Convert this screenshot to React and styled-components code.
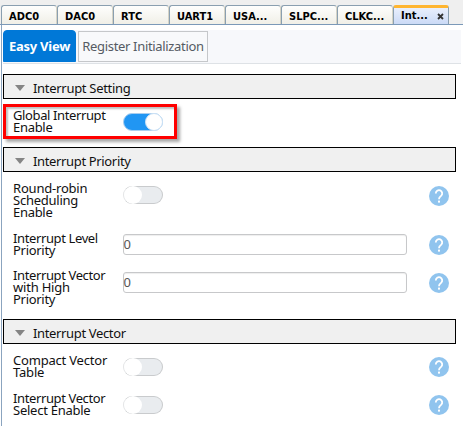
import React from "react";
import styled, { createGlobalStyle } from "styled-components";

const GlobalStyle = createGlobalStyle`
  * { box-sizing: border-box; }
  body { margin: 0; background: #fff; overflow: hidden; }
`;

const Page = styled.main`
  width: 463px;
  height: 426px;
  overflow: hidden;
  display: flex;
  flex-direction: column;
  background: #fff;
  color: #111;
  font: 13px/12px "Noto Sans", sans-serif;
`;

const FileTabs = styled.nav`
  flex: none;
  display: flex;
  height: 25px;
  padding: 5px 0 0 1px;
  background: #efefef;
  border-bottom: 1px solid #7b99b8;
`;

const FileTab = styled.div`
  width: 56px;
  height: 19px;
  display: flex;
  align-items: center;
  justify-content: space-between;
  padding: ${(p) => (p.$active ? "0 4px 0 7px" : "3px 0 0 7px")};
  border: 1px solid #8a9fb0;
  border-right-color: ${(p) => (p.$active ? "#8a9fb0" : "#d5d3c6")};
  border-bottom: 0;
  border-top: ${(p) => (p.$active ? "3px solid #ffb52f" : "1px solid #8a9fb0")};
  border-radius: 3px 3px 0 0;
  background: ${(p) =>
    p.$active
      ? "linear-gradient(#e9effc, #cbdaf6)"
      : "linear-gradient(#fefefd, #f0efe7)"};
  color: #000;
  font: bold 11px/14px "DejaVu Sans Condensed", "DejaVu Sans", sans-serif;
  white-space: nowrap;
`;

const Panel = styled.div`
  flex: 1;
  padding-top: 5px;
  margin-left: 1px;
  padding-left: 1px;
  border-left: 1px solid #8ba4bf;
`;

const ViewTabs = styled.div`
  display: flex;
  align-items: flex-end;
  gap: 2px;
  width: 458px;
  height: 34px;
  padding-bottom: 1px;
  background: #f7f8fb;
  border-bottom: 1px solid #dee2e6;
`;

const ViewTab = styled.div`
  width: ${(p) => (p.$active ? 73 : 130)}px;
  height: ${(p) => (p.$active ? 32 : 31)}px;
  line-height: ${(p) => (p.$active ? 31 : 29)}px;
  text-align: center;
  white-space: nowrap;
  border: 1px solid ${(p) => (p.$active ? "#0078d7" : "#c5c7ca")};
  border-radius: ${(p) => (p.$active ? "4px 4px 0 0" : "0")};
  background: ${(p) => (p.$active ? "#0078d7" : "#f8f9fb")};
  color: ${(p) => (p.$active ? "#fff" : "#555b63")};
  font-weight: ${(p) => (p.$active ? 700 : 400)};
  letter-spacing: ${(p) => p.$spacing}px;
`;

const Sections = styled.div`
  padding-top: 10px;
  width: 453px;
`;

const SectionHeader = styled.header`
  display: flex;
  align-items: center;
  gap: 8px;
  height: 25px;
  padding-left: 11px;
  border: 1px solid #000;
  background: #f0f0f0;
`;

const Arrow = styled.span`
  margin-top: 3px;
  border: 5px solid transparent;
  border-top: 6px solid #858585;
  border-bottom: 0;
`;

const HeaderText = styled.span`
  padding-top: 3px;
  letter-spacing: ${(p) => p.$spacing}px;
  white-space: nowrap;
`;

const Row = styled.div`
  position: relative;
  display: grid;
  grid-template-columns: 110px 284px 1fr;
  height: ${(p) => p.$height}px;
  padding-left: 10px;
`;

const Label = styled.div`
  display: flex;
  flex-direction: column;
  padding-top: ${(p) => p.$top}px;
`;

const LabelLine = styled.span`
  white-space: nowrap;
  letter-spacing: ${(p) => p.$spacing}px;
`;

const Switch = styled.div`
  width: 40px;
  height: 18px;
  display: flex;
  align-items: center;
  justify-content: ${(p) => (p.$on ? "flex-end" : "flex-start")};
  margin-top: ${(p) => p.$top}px;
  border: 1px solid ${(p) => (p.$on ? "#a9cdee" : "#c9cbcd")};
  border-left-color: ${(p) => (p.$on ? "#a9cdee" : "#e4e5e6")};
  border-radius: 9px;
  background: ${(p) => (p.$on ? "#2196f3" : "#e9ecef")};
`;

const Knob = styled.span`
  width: 18px;
  height: 18px;
  flex: none;
  margin-right: -1px;
  border-radius: 50%;
  border: ${(p) => (p.$on ? "1px solid #cbe1f5" : "0")};
  background: #fff;
`;

const Field = styled.div`
  width: 284px;
  height: 21px;
  margin-top: ${(p) => p.$top}px;
  border: 1px solid #c7c8ca;
  border-radius: 3px;
  box-shadow: inset 0 1px 1px #eeeeee;
  line-height: 19px;
  text-indent: -0.5px;
  color: #555;
`;

const Help = styled.svg`
  width: 20px;
  height: 20px;
  margin: ${(p) => p.$top}px 0 0 22px;
`;

const Highlight = styled.div`
  position: absolute;
  left: 0;
  top: 5px;
  width: 174px;
  height: 35px;
  border: 3px solid #f00;
  box-shadow: 3px 3px 3px rgba(0, 0, 0, 0.35), inset 2px 2px 2px rgba(0, 0, 0, 0.25);
`;

const tabs = ["ADC0", "DAC0", "RTC", "UART1", "USA...", "SLPC...", "CLKC..."];

function Section({ title, spacing, children }) {
  return (
    <section>
      <SectionHeader>
        <Arrow />
        <HeaderText $spacing={spacing}>{title}</HeaderText>
      </SectionHeader>
      {children}
    </section>
  );
}

function Setting({ height, lines, labelTop, controlTop, helpTop, field, on, highlighted }) {
  return (
    <Row $height={height}>
      <Label $top={labelTop}>
        {lines.map(([text, spacing]) => (
          <LabelLine key={text} $spacing={spacing}>{text}</LabelLine>
        ))}
      </Label>
      {field !== undefined ? (
        <Field $top={controlTop}>{field}</Field>
      ) : (
        <Switch $top={controlTop} $on={on}><Knob $on={on} /></Switch>
      )}
      {helpTop !== undefined && (
        <Help $top={helpTop} viewBox="0 0 20 20">
          <circle cx="10" cy="10" r="10" fill="#90c4ee" />
          <path d="M6.8 7.4a3.2 3.2 0 1 1 5.5 2.2c-1.3 1.2-2.3 1.7-2.3 3.6" fill="none" stroke="#fff" strokeWidth="1.8" />
          <rect x="9" y="14.6" width="2" height="2" fill="#fff" />
        </Help>
      )}
      {highlighted && <Highlight />}
    </Row>
  );
}

export default function App() {
  return (
    <Page>
      <GlobalStyle />
      <FileTabs>
        {tabs.map((name) => (
          <FileTab key={name}>{name}</FileTab>
        ))}
        <FileTab $active>
          <span>Int...</span>
          <svg width="7" height="7" viewBox="0 0 7 7">
            <path d="M1 1L6 6M6 1L1 6" stroke="#333" strokeWidth="1.8" />
          </svg>
        </FileTab>
      </FileTabs>
      <Panel>
        <ViewTabs>
          <ViewTab $active $spacing={-0.25}>Easy View</ViewTab>
          <ViewTab $spacing={-0.33}>Register Initialization</ViewTab>
        </ViewTabs>
        <Sections>
          <Section title="Interrupt Setting" spacing={-0.3}>
            <Setting height={48} labelTop={10} controlTop={14} on highlighted
              lines={[["Global Interrupt", -0.38], ["Enable", -0.3]]} />
          </Section>
          <Section title="Interrupt Priority" spacing={-0.35}>
            <Setting height={55} labelTop={10} controlTop={14} helpTop={14}
              lines={[["Round-robin", -0.2], ["Scheduling", -0.25], ["Enable", -0.3]]} />
            <Setting height={38} labelTop={5} controlTop={7} helpTop={8} field="0"
              lines={[["Interrupt Level", -0.38], ["Priority", -0.3]]} />
            <Setting height={54} labelTop={4} controlTop={7} helpTop={8} field="0"
              lines={[["Interrupt Vector", -0.38], ["with High", -0.2], ["Priority", -0.3]]} />
          </Section>
          <Section title="Interrupt Vector" spacing={-0.35}>
            <Setting height={38} labelTop={10} controlTop={14} helpTop={13}
              lines={[["Compact Vector", -0.2], ["Table", -0.2]]} />
            <Setting height={44} labelTop={10} controlTop={14} helpTop={13}
              lines={[["Interrupt Vector", -0.38], ["Select Enable", -0.25]]} />
          </Section>
        </Sections>
      </Panel>
    </Page>
  );
}
